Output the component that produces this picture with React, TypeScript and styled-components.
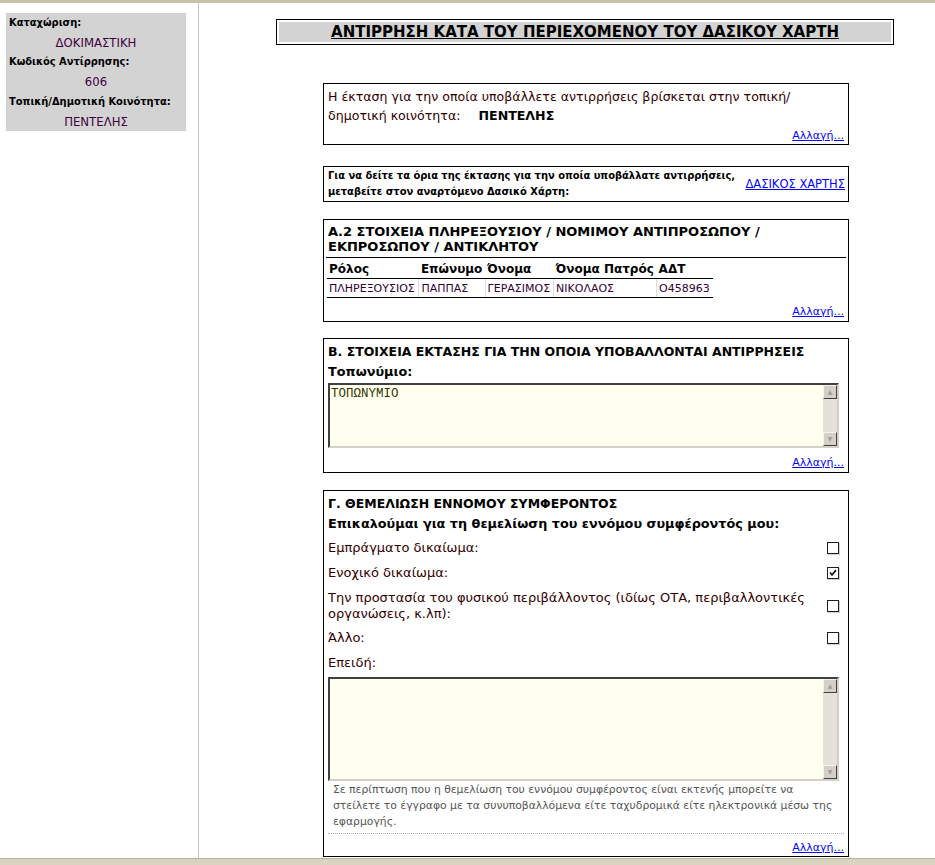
import React, { FC } from "react";
import styled, { createGlobalStyle } from "styled-components";

const GlobalStyle = createGlobalStyle`
  html, body {
    margin: 0;
    padding: 0;
    background: #ffffff;
    overflow: hidden;
  }
  body {
    font-family: "DejaVu Sans", sans-serif;
    color: #330033;
  }
`;

const Page = styled.div`
  display: flex;
  flex-direction: column;
  width: 935px;
  height: 865px;
`;

const TopStrip = styled.div`
  height: 3px;
  flex-shrink: 0;
  background: #c7c2a5;
`;

const Body = styled.div`
  display: flex;
  flex: 1;
  min-height: 0;
`;

const Sidebar = styled.div`
  width: 192px;
  flex-shrink: 0;
  padding: 10px 0 0 6px;
  border-right: 1px solid #c4c4c4;
  font-family: "DejaVu Sans Condensed", "DejaVu Sans", sans-serif;
`;

const InfoBox = styled.div`
  width: 174px;
  background: #d3d3d3;
  padding: 0 3px;
  display: flex;
  flex-direction: column;
`;

const InfoLabel = styled.div`
  font-size: 11px;
  font-weight: 700;
  color: #000;
  line-height: 19.7px;
`;

const InfoValue = styled.div`
  font-size: 13px;
  line-height: 19.7px;
  text-align: center;
  color: #400040;
`;

const Main = styled.div`
  flex: 1;
  padding: 16px 0 0 77px;
  overflow: hidden;
`;

const TitleBox = styled.div`
  width: 612px;
  border: 1px solid #000;
  padding: 2px;
`;

const TitleInner = styled.h1`
  margin: 0;
  height: 20px;
  background: #d3d3d3;
  text-align: center;
  font-size: 15px;
  line-height: 21px;
  font-weight: 700;
  color: #000;
  text-decoration: underline;
`;

const Section = styled.div<{ $top: number }>`
  width: 516px;
  margin: ${(p) => p.$top}px 0 0 47px;
  border: 1px solid #000;
  padding: 3px 4px 1px;
  display: flex;
  flex-direction: column;
`;

const Text = styled.div`
  font-size: 12.6px;
  line-height: 19px;
  color: #330000;
`;

const Strong = styled.strong`
  color: #000;
  margin-left: 14px;
`;

const LinkRow = styled.div`
  display: flex;
  justify-content: flex-end;
  font-size: 11px;
  line-height: 14px;
`;

const Link = styled.a`
  color: #0000ff;
  text-decoration: underline;
  cursor: pointer;
`;

const MapRow = styled.div`
  display: flex;
  align-items: center;
  justify-content: space-between;
  margin: -2px 0 0;
`;

const MapText = styled.div`
  font-family: "DejaVu Sans Condensed", "DejaVu Sans", sans-serif;
  font-size: 11px;
  font-weight: 700;
  line-height: 16px;
  color: #000;
`;

const MapLink = styled(Link)`
  font-size: 11.5px;
  white-space: nowrap;
  margin-right: -1px;
`;

const Heading = styled.div`
  font-size: 13px;
  font-weight: 700;
  line-height: 15px;
  color: #000;
  padding: 1px 2px 0;
`;

const HeadingRule = styled.div`
  border-bottom: 1px solid #000;
  margin: 0 -2px;
  padding-bottom: 3px;
`;

const SubHeading = styled.div<{ $size?: number }>`
  font-size: ${(p) => p.$size ?? 12.8}px;
  font-weight: 700;
  line-height: 20px;
  color: #000;
`;

const Table = styled.table`
  border-collapse: collapse;
  margin: 0 0 0 -1px;
  width: 386px;
`;

const Th = styled.th<{ $w: number }>`
  width: ${(p) => p.$w}px;
  text-align: left;
  font-size: 12px;
  font-weight: 700;
  color: #000;
  padding: 2px 2px 0;
  height: 18px;
  border-bottom: 1px solid #000;
  white-space: nowrap;
`;

const Td = styled.td`
  font-size: 11px;
  color: #330033;
  padding: 3px 2px 0;
  height: 15px;
  vertical-align: top;
  border-bottom: 1px solid #000;
  border-right: 1px solid #dcdcdc;
  white-space: nowrap;
  &:last-child {
    border-right: none;
  }
`;

const Spacer = styled.div<{ $h: number }>`
  height: ${(p) => p.$h}px;
  flex-shrink: 0;
`;

const FieldWrap = styled.div<{ $h: number }>`
  display: flex;
  height: ${(p) => p.$h}px;
  margin: 0 5px 0 0;
  border: 2px solid;
  border-color: #404040 #d4d0c8 #d4d0c8 #404040;
  background: #fffff0;
`;

const Field = styled.textarea`
  flex: 1;
  border: none;
  outline: none;
  resize: none;
  background: transparent;
  padding: 2px 1px;
  margin: 0;
  font-family: "Liberation Mono", "DejaVu Sans Mono", monospace;
  font-size: 12.5px;
  line-height: 15px;
  color: #333300;
  overflow: hidden;
`;

const ScrollBar = styled.div`
  width: 14px;
  display: flex;
  flex-direction: column;
  justify-content: space-between;
  background: #e4e2d8;
`;

const ScrollButton = styled.div`
  height: 12px;
  border: 1px solid;
  border-color: #f4f3ee #404040 #404040 #f4f3ee;
  background: #d4d0c8;
  display: flex;
  align-items: center;
  justify-content: center;
  font-size: 6px;
  line-height: 1;
  color: #a09e90;
`;

const CheckRow = styled.div<{ $h: number }>`
  display: flex;
  align-items: center;
  justify-content: space-between;
  height: ${(p) => p.$h}px;
  font-size: 13px;
  line-height: 16px;
  color: #330000;
`;

const CheckLabel = styled.div`
  max-width: 480px;
`;

const Box = styled.span`
  width: 10px;
  height: 10px;
  flex-shrink: 0;
  margin-right: 5px;
  border: 1px solid #1e1e1e;
  box-shadow: 1px 1px 0 #d4d0c8;
  background: #fff;
  display: flex;
  align-items: center;
  justify-content: center;
`;

const Note = styled.div`
  font-size: 10.8px;
  line-height: 16px;
  color: #555555;
  padding: 1px 0 3px 5px;
  border-bottom: 1px dotted #b0b0b0;
`;

const BottomBar = styled.div`
  height: 6px;
  flex-shrink: 0;
  border-top: 1px solid #b9b59c;
  background: #d8d4c0;
`;

const Check: FC<{ checked?: boolean }> = ({ checked }) => (
  <Box>
    {checked && (
      <svg width="8" height="8" viewBox="0 0 8 8">
        <path d="M1 3.5 L3 5.8 L7 1.2" fill="none" stroke="#1e1e1e" strokeWidth="1.8" />
      </svg>
    )}
  </Box>
);

const TextField: FC<{ h: number; value?: string }> = ({ h, value }) => (
  <FieldWrap $h={h}>
    <Field defaultValue={value} />
    <ScrollBar>
      <ScrollButton>▲</ScrollButton>
      <ScrollButton>▼</ScrollButton>
    </ScrollBar>
  </FieldWrap>
);

const App: FC = () => (
  <Page>
    <GlobalStyle />
    <TopStrip />
    <Body>
      <Sidebar>
        <InfoBox>
          <InfoLabel>Καταχώριση:</InfoLabel>
          <InfoValue>ΔΟΚΙΜΑΣΤΙΚΗ</InfoValue>
          <InfoLabel>Κωδικός Αντίρρησης:</InfoLabel>
          <InfoValue>606</InfoValue>
          <InfoLabel>Τοπική/Δημοτική Κοινότητα:</InfoLabel>
          <InfoValue>ΠΕΝΤΕΛΗΣ</InfoValue>
        </InfoBox>
      </Sidebar>
      <Main>
        <TitleBox>
          <TitleInner>ΑΝΤΙΡΡΗΣΗ ΚΑΤΑ ΤΟΥ ΠΕΡΙΕΧΟΜΕΝΟΥ ΤΟΥ ΔΑΣΙΚΟΥ ΧΑΡΤΗ</TitleInner>
        </TitleBox>

        <Section $top={38}>
          <Text>
            Η έκταση για την οποία υποβάλλετε αντιρρήσεις βρίσκεται στην τοπική/
            δημοτική κοινότητα: <Strong>ΠΕΝΤΕΛΗΣ</Strong>
          </Text>
          <Spacer $h={4} />
          <LinkRow>
            <Link>Αλλαγή...</Link>
          </LinkRow>
        </Section>

        <Section $top={21}>
          <MapRow>
            <MapText>
              Για να δείτε τα όρια της έκτασης για την οποία υποβάλλατε αντιρρήσεις,
              <br />
              μεταβείτε στον αναρτόμενο Δασικό Χάρτη:
            </MapText>
            <MapLink>ΔΑΣΙΚΟΣ ΧΑΡΤΗΣ</MapLink>
          </MapRow>
        </Section>

        <Section $top={17}>
          <HeadingRule>
            <Heading>
              Α.2 ΣΤΟΙΧΕΙΑ ΠΛΗΡΕΞΟΥΣΙΟΥ / ΝΟΜΙΜΟΥ ΑΝΤΙΠΡΟΣΩΠΟΥ / ΕΚΠΡΟΣΩΠΟΥ / ΑΝΤΙΚΛΗΤΟΥ
            </Heading>
          </HeadingRule>
          <Table>
            <thead>
              <tr>
                <Th $w={94}>Ρόλος</Th>
                <Th $w={65}>Επώνυμο</Th>
                <Th $w={68}>Όνομα</Th>
                <Th $w={102}>Όνομα Πατρός</Th>
                <Th $w={57}>ΑΔΤ</Th>
              </tr>
            </thead>
            <tbody>
              <tr>
                <Td>ΠΛΗΡΕΞΟΥΣΙΟΣ</Td>
                <Td>ΠΑΠΠΑΣ</Td>
                <Td>ΓΕΡΑΣΙΜΟΣ</Td>
                <Td>ΝΙΚΟΛΑΟΣ</Td>
                <Td>Ο458963</Td>
              </tr>
            </tbody>
          </Table>
          <Spacer $h={7} />
          <LinkRow>
            <Link>Αλλαγή...</Link>
          </LinkRow>
          <Spacer $h={1} />
        </Section>

        <Section $top={16}>
          <SubHeading $size={12.5}>
            Β. ΣΤΟΙΧΕΙΑ ΕΚΤΑΣΗΣ ΓΙΑ ΤΗΝ ΟΠΟΙΑ ΥΠΟΒΑΛΛΟΝΤΑΙ ΑΝΤΙΡΡΗΣΕΙΣ
          </SubHeading>
          <SubHeading>Τοπωνύμιο:</SubHeading>
          <Spacer $h={1} />
          <TextField h={61} value="ΤΟΠΩΝΥΜΙΟ" />
          <Spacer $h={8} />
          <LinkRow>
            <Link>Αλλαγή...</Link>
          </LinkRow>
          <Spacer $h={1} />
        </Section>

        <Section $top={17}>
          <SubHeading $size={12.5}>Γ. ΘΕΜΕΛΙΩΣΗ ΕΝΝΟΜΟΥ ΣΥΜΦΕΡΟΝΤΟΣ</SubHeading>
          <SubHeading>Επικαλούμαι για τη θεμελίωση του εννόμου συμφέροντός μου:</SubHeading>
          <CheckRow $h={28}>
            <CheckLabel>Εμπράγματο δικαίωμα:</CheckLabel>
            <Check />
          </CheckRow>
          <CheckRow $h={22}>
            <CheckLabel>Ενοχικό δικαίωμα:</CheckLabel>
            <Check checked />
          </CheckRow>
          <CheckRow $h={44}>
            <CheckLabel>
              Την προστασία του φυσικού περιβάλλοντος (ιδίως ΟΤΑ, περιβαλλοντικές οργανώσεις, κ.λπ):
            </CheckLabel>
            <Check />
          </CheckRow>
          <CheckRow $h={20}>
            <CheckLabel>Άλλο:</CheckLabel>
            <Check />
          </CheckRow>
          <CheckRow $h={29}>
            <CheckLabel>Επειδή:</CheckLabel>
          </CheckRow>
          <TextField h={100} />
          <Note>
            Σε περίπτωση που η θεμελίωση του εννόμου συμφέροντος είναι εκτενής μπορείτε να στείλετε το
            έγγραφο με τα συνυποβαλλόμενα είτε ταχυδρομικά είτε ηλεκτρονικά μέσω της εφαρμογής.
          </Note>
          <Spacer $h={7} />
          <LinkRow>
            <Link>Αλλαγή...</Link>
          </LinkRow>
        </Section>
      </Main>
    </Body>
    <BottomBar />
  </Page>
);

export default App;
